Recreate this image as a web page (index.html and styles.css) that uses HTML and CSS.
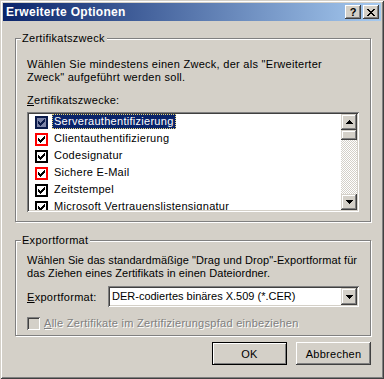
FILE: index.html
```html
<!DOCTYPE html>
<html lang="de">
<head>
<meta charset="utf-8">
<title>Erweiterte Optionen</title>
<link rel="stylesheet" href="styles.css">
</head>
<body>
<div class="window">
  <div class="titlebar">
    <span class="title">Erweiterte Optionen</span>
    <div class="tbtns">
      <button class="tbtn help">?</button>
      <button class="tbtn close"><svg width="8" height="7" viewBox="0 0 8 7" shape-rendering="crispEdges"><path d="M0 0h2v1H0zM6 0h2v1H6zM1 1h2v1H1zM5 1h2v1H5zM2 2h4v1H2zM3 3h2v1H3zM2 4h4v1H2zM1 5h2v1H1zM5 5h2v1H5zM0 6h2v1H0zM6 6h2v1H6z" fill="#000"/></svg></button>
    </div>
  </div>
  <div class="content">
    <fieldset class="group g1">
      <legend>Zertifikatszweck</legend>
      <p class="desc">Wählen Sie mindestens einen Zweck, der als "Erweiterter<br>Zweck" aufgeführt werden soll.</p>
      <div class="label"><u>Z</u>ertifikatszwecke:</div>
      <div class="listbox">
        <ul class="items">
          <li class="item"><span class="cb sel"><svg width="7" height="7" viewBox="0 0 7 7" shape-rendering="crispEdges"><path class="chk" d="M6 0h1v1H6zM5 1h2v1H5zM0 2h1v1H0zM4 2h3v1H4zM0 3h2v1H0zM3 3h3v1H3zM0 4h5v1H0zM1 5h3v1H1zM2 6h1v1H2z"/></svg></span><span class="txt seltxt">Serverauthentifizierung</span></li>
          <li class="item"><span class="cb red"><svg width="7" height="7" viewBox="0 0 7 7" shape-rendering="crispEdges"><path class="chk" d="M6 0h1v1H6zM5 1h2v1H5zM0 2h1v1H0zM4 2h3v1H4zM0 3h2v1H0zM3 3h3v1H3zM0 4h5v1H0zM1 5h3v1H1zM2 6h1v1H2z"/></svg></span><span class="txt">Clientauthentifizierung</span></li>
          <li class="item"><span class="cb"><svg width="7" height="7" viewBox="0 0 7 7" shape-rendering="crispEdges"><path class="chk" d="M6 0h1v1H6zM5 1h2v1H5zM0 2h1v1H0zM4 2h3v1H4zM0 3h2v1H0zM3 3h3v1H3zM0 4h5v1H0zM1 5h3v1H1zM2 6h1v1H2z"/></svg></span><span class="txt">Codesignatur</span></li>
          <li class="item"><span class="cb red"><svg width="7" height="7" viewBox="0 0 7 7" shape-rendering="crispEdges"><path class="chk" d="M6 0h1v1H6zM5 1h2v1H5zM0 2h1v1H0zM4 2h3v1H4zM0 3h2v1H0zM3 3h3v1H3zM0 4h5v1H0zM1 5h3v1H1zM2 6h1v1H2z"/></svg></span><span class="txt">Sichere E-Mail</span></li>
          <li class="item"><span class="cb"><svg width="7" height="7" viewBox="0 0 7 7" shape-rendering="crispEdges"><path class="chk" d="M6 0h1v1H6zM5 1h2v1H5zM0 2h1v1H0zM4 2h3v1H4zM0 3h2v1H0zM3 3h3v1H3zM0 4h5v1H0zM1 5h3v1H1zM2 6h1v1H2z"/></svg></span><span class="txt">Zeitstempel</span></li>
          <li class="item"><span class="cb"><svg width="7" height="7" viewBox="0 0 7 7" shape-rendering="crispEdges"><path class="chk" d="M6 0h1v1H6zM5 1h2v1H5zM0 2h1v1H0zM4 2h3v1H4zM0 3h2v1H0zM3 3h3v1H3zM0 4h5v1H0zM1 5h3v1H1zM2 6h1v1H2z"/></svg></span><span class="txt">Microsoft Vertrauenslistensignatur</span></li>
        </ul>
        <div class="vscroll">
          <div class="sbtn"><svg width="7" height="4" viewBox="0 0 7 4" shape-rendering="crispEdges"><path d="M3 0h1v1H3zM2 1h3v1H2zM1 2h5v1H1zM0 3h7v1H0z" fill="#000"/></svg></div>
          <div class="thumb"></div>
          <div class="track"></div>
          <div class="sbtn"><svg width="7" height="4" viewBox="0 0 7 4" shape-rendering="crispEdges"><path d="M0 0h7v1H0zM1 1h5v1H1zM2 2h3v1H2zM3 3h1v1H3z" fill="#000"/></svg></div>
        </div>
      </div>
    </fieldset>
    <fieldset class="group g2">
      <legend>Exportformat</legend>
      <p class="desc desc2">Wählen Sie das standardmäßige "Drag und Drop"-Exportformat für<br>das Ziehen eines Zertifikats in einen Dateiordner.</p>
      <div class="row">
        <span class="rowlabel"><u>E</u>xportformat:</span>
        <div class="combo">
          <span class="val">DER-codiertes binäres X.509 (*.CER)</span>
          <span class="drop"><svg width="7" height="4" viewBox="0 0 7 4" shape-rendering="crispEdges"><path d="M0 0h7v1H0zM1 1h5v1H1zM2 2h3v1H2zM3 3h1v1H3z" fill="#000"/></svg></span>
        </div>
      </div>
      <div class="chkrow">
        <span class="cbd"></span>
        <span class="dis"><u>A</u>lle Zertifikate im Zertifizierungspfad einbeziehen</span>
      </div>
    </fieldset>
    <div class="actions">
      <button class="btn default">OK</button>
      <button class="btn">Abbrechen</button>
    </div>
  </div>
</div>
</body>
</html>
```
FILE: styles.css
```css
* { box-sizing: border-box; }
html, body { margin: 0; padding: 0; }
body {
  width: 384px;
  height: 379px;
  overflow: hidden;
  font-family: "Liberation Sans", Arial, sans-serif;
  font-size: 11px;
  letter-spacing: 0.28px;
  color: #000;
}
.window {
  width: 384px;
  height: 379px;
  background: #D4D0C8;
  padding: 3px;
  display: flex;
  flex-direction: column;
  box-shadow: inset 1px 1px 0 #D4D0C8, inset -1px -1px 0 #404040, inset 2px 2px 0 #fff, inset -2px -2px 0 #808080;
}
.titlebar {
  height: 18px;
  flex: none;
  display: flex;
  align-items: center;
  justify-content: space-between;
  padding: 0 2px 0 2px;
  background: linear-gradient(to right, #0A246A, #A6CAF0);
}
.title {
  color: #fff;
  font-weight: bold;
  font-size: 12px;
  letter-spacing: 0.3px;
  line-height: 14px;
  padding-left: 1px;
}
.tbtns { display: flex; gap: 2px; }
.tbtn {
  width: 16px;
  height: 14px;
  padding: 0;
  border: 0;
  background: #D4D0C8;
  box-shadow: inset -1px -1px 0 #404040, inset 1px 1px 0 #fff, inset -2px -2px 0 #808080;
  display: flex;
  align-items: center;
  justify-content: center;
  font-family: "Liberation Sans", Arial, sans-serif;
  font-weight: bold;
  font-size: 11px;
  color: #000;
}
.close svg { display: block; }
.content {
  flex: 1;
  display: flex;
  flex-direction: column;
  padding: 0 10px 0 12px;
}
.group {
  margin: 0;
  min-width: 0;
  border: 1px solid #808080;
  box-shadow: inset 1px 1px 0 #fff, 1px 1px 0 #fff;
}
.group legend {
  margin-left: -6px;
  padding: 0 2px 0 1px;
  line-height: 13px;
  background: #D4D0C8;
}
.g1 { margin-top: 11px; padding: 13px 11px 9px 11px; }
.g2 { margin-top: 12px; padding: 7px 11px 5px 11px; }
.desc { margin: 0; line-height: 13px; white-space: nowrap; }
.desc2 { letter-spacing: 0.08px; }
.label { margin-top: 10px; line-height: 13px; }
.listbox {
  margin-top: 5px;
  height: 100px;
  display: flex;
  padding: 2px;
  background: #fff;
  box-shadow: inset 1px 1px 0 #808080, inset -1px -1px 0 #fff, inset 2px 2px 0 #404040, inset -2px -2px 0 #D4D0C8;
}
.items {
  flex: 1;
  margin: 0;
  padding: 0;
  list-style: none;
  overflow: hidden;
}
.item {
  height: 17px;
  display: flex;
  align-items: flex-start;
  padding-left: 6px;
  white-space: nowrap;
}
.cb {
  flex: none;
  width: 13px;
  height: 13px;
  margin-top: 2px;
  border: 2px solid #000;
  background: #fff;
  display: flex;
  align-items: center;
  justify-content: center;
}
.cb svg { display: block; }
.chk { fill: #000; }
.cb.red { border-color: #FF0000; }
.cb.sel { border-color: #0A1A4A; background: #7C84A8; }
.cb.sel .chk { fill: #0A1A4A; }
.txt {
  margin-left: 4px;
  padding: 0 2px;
  line-height: 15px;
}
.seltxt {
  background: #0A246A;
  color: #fff;
  outline: 1px dotted #E8D878;
  outline-offset: -1px;
}
.vscroll {
  width: 16px;
  flex: none;
  display: flex;
  flex-direction: column;
  background: repeating-conic-gradient(#D4D0C8 0 25%, #fff 0 50%) 0 0 / 2px 2px;
}
.sbtn, .thumb, .drop {
  background: #D4D0C8;
  box-shadow: inset -1px -1px 0 #404040, inset 1px 1px 0 #D4D0C8, inset -2px -2px 0 #808080, inset 2px 2px 0 #fff;
}
.sbtn {
  height: 16px;
  display: flex;
  align-items: center;
  justify-content: center;
}
.sbtn svg, .drop svg { display: block; }
.thumb { height: 10px; }
.track { flex: 1; }
.row {
  margin-top: 6px;
  height: 21px;
  display: flex;
  align-items: center;
}
.rowlabel { width: 81px; flex: none; }
.combo {
  width: 251px;
  height: 21px;
  display: flex;
  padding: 2px;
  background: #fff;
  box-shadow: inset 1px 1px 0 #808080, inset -1px -1px 0 #fff, inset 2px 2px 0 #404040, inset -2px -2px 0 #D4D0C8;
}
.val { flex: 1; padding-left: 2px; line-height: 17px; letter-spacing: 0; }
.drop {
  width: 16px;
  height: 17px;
  display: flex;
  align-items: center;
  justify-content: center;
}
.chkrow {
  margin-top: 10px;
  height: 13px;
  display: flex;
  align-items: center;
}
.cbd {
  width: 13px;
  height: 13px;
  flex: none;
  background: #D4D0C8;
  box-shadow: inset 1px 1px 0 #808080, inset -1px -1px 0 #fff, inset 2px 2px 0 #404040, inset -2px -2px 0 #D4D0C8;
}
.dis {
  margin-left: 4px;
  color: #808080;
  text-shadow: 1px 1px 0 #fff;
  line-height: 13px;
}
.actions {
  margin-top: 6px;
  display: flex;
  justify-content: flex-end;
  gap: 9px;
}
.btn {
  width: 75px;
  height: 23px;
  padding: 0;
  border: 0;
  background: #D4D0C8;
  font-family: "Liberation Sans", Arial, sans-serif;
  font-size: 11px;
  letter-spacing: 0.28px;
  color: #000;
  box-shadow: inset -1px -1px 0 #404040, inset 1px 1px 0 #fff, inset -2px -2px 0 #808080;
}
.btn.default {
  box-shadow: inset 0 0 0 1px #000, inset 2px 2px 0 #fff, inset -2px -2px 0 #808080;
}
```
